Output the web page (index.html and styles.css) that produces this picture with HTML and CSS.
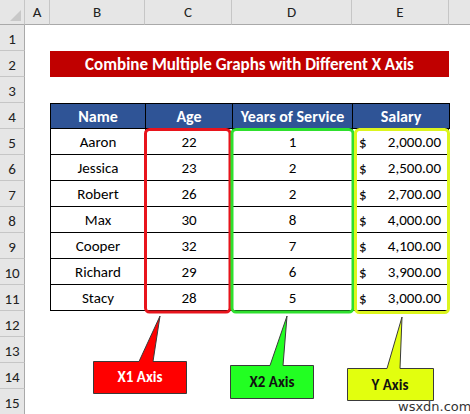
FILE: index.html
```html
<!DOCTYPE html>
<html>
<head>
<meta charset="utf-8">
<link rel="stylesheet" href="styles.css">
</head>
<body>
<div class="sheet">
  <div class="corner"><span class="tri"></span></div>
  <div class="ch">A</div><div class="ch">B</div><div class="ch">C</div><div class="ch">D</div><div class="ch">E</div><div class="ch last"></div>

  <div class="rh">1</div><div class="blank full"></div>
  <div class="rh">2</div><div class="blank"></div><div class="title">Combine Multiple Graphs with Different X Axis</div><div class="blank"></div>
  <div class="rh">3</div><div class="blank full"></div>
  <div class="rh">4</div><div class="blank"></div>
  <div class="th">Name</div><div class="th">Age</div><div class="th">Years of Service</div><div class="th">Salary</div><div class="blank"></div>

  <div class="rh">5</div><div class="blank"></div><div class="td">Aaron</div><div class="td">22</div><div class="td">1</div><div class="td money"><span>$</span><span>2,000.00</span></div><div class="blank"></div>
  <div class="rh">6</div><div class="blank"></div><div class="td">Jessica</div><div class="td">23</div><div class="td">2</div><div class="td money"><span>$</span><span>2,500.00</span></div><div class="blank"></div>
  <div class="rh">7</div><div class="blank"></div><div class="td">Robert</div><div class="td">26</div><div class="td">2</div><div class="td money"><span>$</span><span>2,700.00</span></div><div class="blank"></div>
  <div class="rh">8</div><div class="blank"></div><div class="td">Max</div><div class="td">30</div><div class="td">8</div><div class="td money"><span>$</span><span>4,000.00</span></div><div class="blank"></div>
  <div class="rh">9</div><div class="blank"></div><div class="td">Cooper</div><div class="td">32</div><div class="td">7</div><div class="td money"><span>$</span><span>4,100.00</span></div><div class="blank"></div>
  <div class="rh">10</div><div class="blank"></div><div class="td">Richard</div><div class="td">29</div><div class="td">6</div><div class="td money"><span>$</span><span>3,900.00</span></div><div class="blank"></div>
  <div class="rh">11</div><div class="blank"></div><div class="td">Stacy</div><div class="td">28</div><div class="td">5</div><div class="td money"><span>$</span><span>3,000.00</span></div><div class="blank"></div>

  <div class="rh">12</div><div class="blank full"></div>
  <div class="rh">13</div><div class="blank full"></div>
  <div class="rh">14</div><div class="blank full"></div>
  <div class="rh">15</div><div class="blank full"></div>

  <svg class="overlay" width="470" height="414" viewBox="0 0 470 414">
    <rect x="145.5" y="129.5" width="84.5" height="182.5" rx="4" ry="4" fill="none" stroke="#e8141c" stroke-width="3"/>
    <rect x="232" y="129.5" width="121" height="182.5" rx="4" ry="4" fill="none" stroke="#2ee02e" stroke-width="3"/>
    <rect x="355.5" y="129.5" width="93" height="183" rx="4" ry="4" fill="none" stroke="#dcf51e" stroke-width="3"/>

    <polygon points="93.5,361.5 139,361.5 160,316 153,361.5 186.5,361.5 186.5,393.5 93.5,393.5" fill="#ff0000" stroke="#3a3a3a" stroke-width="1"/>
    <text x="140" y="382" class="lbl white">X1 Axis</text>

    <polygon points="230.5,365.5 270,365.5 287,316 283,365.5 313.5,365.5 313.5,398.5 230.5,398.5" fill="#22ff22" stroke="#3a3a3a" stroke-width="1"/>
    <text x="272" y="387" class="lbl">X2 Axis</text>

    <polygon points="347.5,368.5 387,368.5 402,317 400,368.5 433.5,368.5 433.5,400.5 347.5,400.5" fill="#e2ff0e" stroke="#3a3a3a" stroke-width="1"/>
    <text x="390" y="390" class="lbl">Y Axis</text>
  </svg>
  <div class="wm">wsxdn.com</div>
</div>
</body>
</html>
```

FILE: styles.css
```css
html, body {
  margin: 0;
  padding: 0;
  background: #ffffff;
}
body {
  width: 470px;
  height: 414px;
  overflow: hidden;
  font-family: Carlito, Calibri, Lato, "Liberation Sans", sans-serif;
  color: #000;
}
.sheet {
  position: relative;
  display: grid;
  grid-template-columns: 25px 25px 95px 87px 120px 97px 21px;
  grid-template-rows: 25px repeat(15, 26px);
  width: 470px;
  height: 414px;
  overflow: hidden;
}
.corner {
  position: relative;
  background: #e6e6e6;
  border-right: 1px solid #c6c6c6;
  border-bottom: 1px solid #a9a9a9;
}
.tri {
  position: absolute;
  right: 3px;
  bottom: 3px;
  width: 0;
  height: 0;
  border-left: 11px solid transparent;
  border-bottom: 11px solid #c8c8c8;
}
.ch {
  background: #e6e6e6;
  border-right: 1px solid #c6c6c6;
  border-bottom: 1px solid #a9a9a9;
  display: flex;
  align-items: center;
  justify-content: center;
  color: #222;
  font-family: Carlito, Calibri, "Liberation Sans", sans-serif;
  font-size: 15px;
}
.ch.last { border-right: none; }
.rh {
  grid-column: 1;
  background: #e6e6e6;
  border-right: 1px solid #a9a9a9;
  border-bottom: 1px solid #c6c6c6;
  display: flex;
  align-items: flex-end;
  justify-content: center;
  padding-bottom: 2px;
  box-sizing: border-box;
  font-family: Carlito, Calibri, "Liberation Sans", sans-serif;
  font-size: 15px;
  color: #222;
}
.blank { background: #fff; }
.blank.full { grid-column: 2 / 8; }
.title {
  grid-column: 3 / 7;
  background: #c00000;
  color: #fff;
  font-weight: bold;
  font-size: 17px;
  display: flex;
  align-items: center;
  justify-content: center;
}
.th {
  background: #2f5496;
  color: #fff;
  font-weight: bold;
  font-size: 16px;
  display: flex;
  align-items: center;
  justify-content: center;
  border-top: 1px solid #000;
  border-left: 1px solid #000;
  border-bottom: 1px solid #000;
}
.td {
  display: flex;
  align-items: center;
  justify-content: center;
  font-size: 15px;
  border-left: 1px solid #000;
  border-bottom: 1px solid #000;
}
.td.money {
  justify-content: space-between;
  padding: 0 7px 0 6px;
  border-right: 1px solid #000;
}
.sheet > .th + .blank { border-left: 1px solid #000; }
.overlay {
  position: absolute;
  left: 0;
  top: 0;
  pointer-events: none;
}
.lbl {
  font-family: Carlito, Calibri, Lato, "Liberation Sans", sans-serif;
  font-weight: bold;
  font-size: 15px;
  text-anchor: middle;
  fill: #111;
}
.lbl.white { fill: #fff; }
.wm {
  position: absolute;
  left: 398px;
  top: 399px;
  font-family: "DejaVu Sans", "Liberation Sans", sans-serif;
  font-size: 13px;
  color: #333;
  text-shadow: 0 0 2px #fff;
}
```
